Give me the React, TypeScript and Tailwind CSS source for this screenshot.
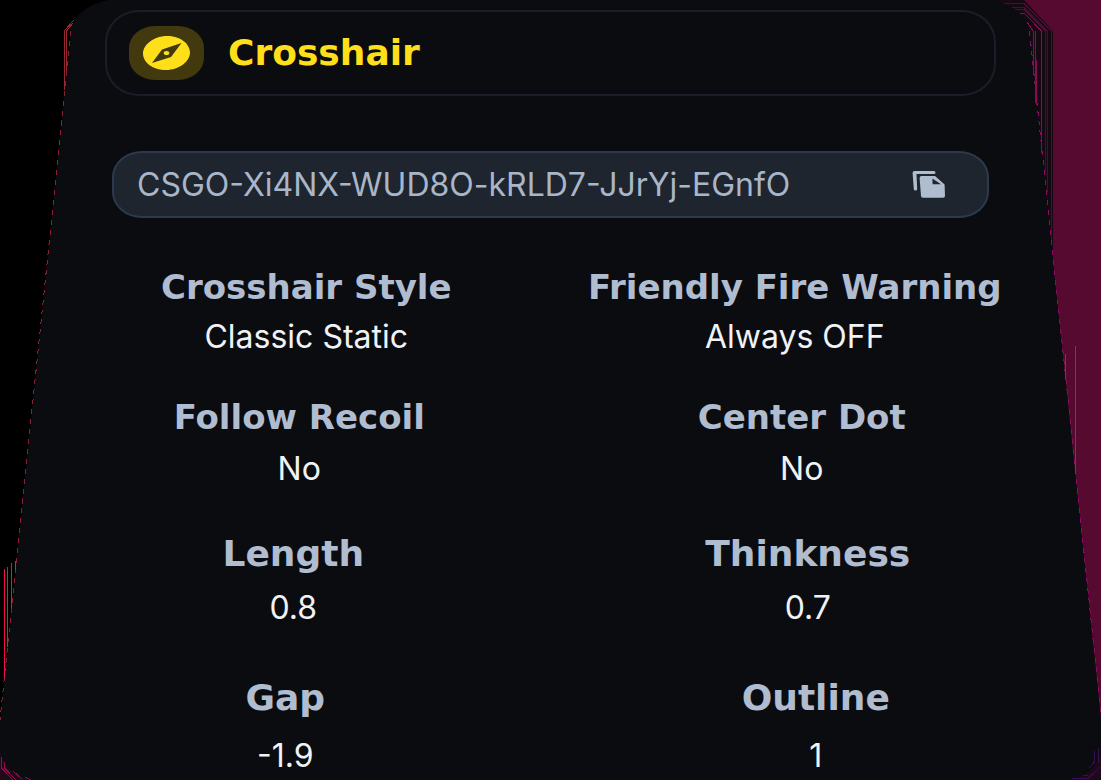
type Setting = { label: string; value: string };

type Row = { inset: string; gap: string; labelSize: string; items: [Setting, Setting] };

const rows: Row[] = [
  {
    inset: "px-[62px] mb-[42px]",
    gap: "gap-3",
    labelSize: "text-[34px]",
    items: [
      { label: "Crosshair Style", value: "Classic Static" },
      { label: "Friendly Fire Warning", value: "Always OFF" },
    ],
  },
  {
    inset: "px-12 mb-[47px]",
    gap: "gap-3.5",
    labelSize: "text-[34px]",
    items: [
      { label: "Follow Recoil", value: "No" },
      { label: "Center Dot", value: "No" },
    ],
  },
  {
    inset: "px-9 mb-[52px]",
    gap: "gap-4",
    labelSize: "text-[36px]",
    items: [
      { label: "Length", value: "0.8" },
      { label: "Thinkness", value: "0.7" },
    ],
  },
  {
    inset: "px-5",
    gap: "gap-5",
    labelSize: "text-[36px]",
    items: [
      { label: "Gap", value: "-1.9" },
      { label: "Outline", value: "1" },
    ],
  },
];

function Backdrop() {
  return (
    <svg
      aria-hidden="true"
      className="absolute inset-0 h-full w-full"
      viewBox="0 0 1101 780"
      preserveAspectRatio="none"
      fill="none"
    >
      <rect width="550" height="780" fill="#000" />
      <rect x="550" width="551" height="780" fill="#570a2f" />
      <path d="M0 752V780H34Z" fill="#200a18" />
      <path d="M1101 750V780H1060Z" fill="#1f0818" />
      <path d="M990 0H1024L1053 31V262H1040Z" fill="#160914" />
      <path
        d="M108 0C86 5 73 16 71 31L0 722V752C5 768 15 777 32 780H1070C1086 777 1097 768 1101 752V718L1029 31C1026 16 1012 3 990 0Z"
        fill="#0b0c10"
      />
      <g shapeRendering="crispEdges">
        <path d="M64.500 90V30.500L74 20M66.500 75V31L73 23" stroke="#972831" />
        <path d="M71 31L0 720" stroke="#8c2030" strokeDasharray="5 5" />
        <path d="M4.500 569V678M7.500 567V647M11.500 563V608M15.500 561V570" stroke="#f20d50" />
        <path d="M1.500 757V768L13 780M4.500 762V768L16 780M13 771L22 779M25 777L31 780" stroke="#8f0a4c" />
        <path d="M1029.500 31L1101 715" stroke="#8b0a62" strokeDasharray="5 5" />
        <path d="M1020 13H1024L1041.500 31V153M1033.500 31V75M1035.500 31V103M1036.500 60V105M1027 22L1033 31" stroke="#8b0a55" />
        <path
          d="M1004 3.500H1024L1051.500 31V240M1012 7.500H1024L1047.500 31V192M1015 9.500H1024L1045.500 31V172"
          stroke="#46102e"
        />
        <path d="M1065.500 354V379M1075.500 346V474" stroke="#a01896" />
        <path d="M1072 778.500H1088L1100 767M1083 775.500H1088M1094.500 751V762L1089 768M1098.500 748V763" stroke="#341050" />
      </g>
    </svg>
  );
}

function CompassIcon() {
  return (
    <svg aria-hidden="true" className="h-[34px] w-[47px]" viewBox="0 0 47 34">
      <path
        fill="#ffde1a"
        fillRule="evenodd"
        d="M24 0C37 0 47 7.500 47 16.500S36 34 23 34 0 26.500 0 17.500 11 0 24 0ZM38.500 7L19 13.500L9 27L28 21Z"
      />
      <ellipse cx="23.500" cy="17" rx="2.800" ry="2" fill="#ffde1a" />
    </svg>
  );
}

function CopyIcon() {
  return (
    <svg aria-hidden="true" className="h-[27px] w-[33px]" viewBox="0 0 33 27" fill="#b0bdcf">
      <path d="M2.500 0H22Q23.500 0 23.500 1.500T22 3H4.500L5.200 18Q5.200 19.500 3.500 19.500T1.800 18L.600 2Q.600 0 2.500 0Z" />
      <path
        fillRule="evenodd"
        d="M9.500 5H23L32.600 13.500L33 25Q33 26.700 31 26.700H11Q9 26.700 9 25L7.600 7Q7.600 5 9.500 5ZM20.400 7.500L20.600 13.300H29Z"
      />
    </svg>
  );
}

export default function App() {
  return (
    <main className="relative min-h-screen overflow-hidden bg-black font-['Inter','Liberation_Sans',sans-serif]">
      <Backdrop />
      <div className="relative pt-2.5">
        <header className="mx-[105px] flex h-[86px] items-center gap-6 rounded-[34px/32px] border-2 border-[#181f29] px-[22px]">
          <span className="flex h-[54px] w-[75px] shrink-0 items-center justify-center rounded-[26px/22px] bg-[#43390e]">
            <CompassIcon />
          </span>
          <h1 className="font-['DejaVu_Sans',sans-serif] text-[36px] leading-10 font-bold text-[#ffde1a]">Crosshair</h1>
        </header>

        <div className="mx-28 mt-[55px] flex h-[67px] items-center rounded-[30px/26px] border-2 border-[#2c3a4b] bg-[#1e252f] pr-[42px] pl-[23px]">
          <input
            readOnly
            aria-label="Crosshair share code"
            value="CSGO-Xi4NX-WUD8O-kRLD7-JJrYj-EGnfO"
            className="min-w-0 flex-1 bg-transparent text-[32px] leading-9 text-[#a9b6c8] outline-none"
          />
          <button type="button" aria-label="Copy code" className="shrink-0">
            <CopyIcon />
          </button>
        </div>

        <dl className="mt-[49px] pb-1.5">
          {rows.map((row) => (
            <div key={row.items[0].label} className={`grid grid-cols-2 ${row.inset}`}>
              {row.items.map((item) => (
                <div key={item.label} className={`flex flex-col items-center whitespace-nowrap ${row.gap}`}>
                  <dt
                    className={`font-['DejaVu_Sans',sans-serif] leading-10 font-bold text-[#b0bdd0] ${row.labelSize}`}
                  >
                    {item.label}
                  </dt>
                  <dd className="text-[32px] leading-9 text-[#f0f2f5]">{item.value}</dd>
                </div>
              ))}
            </div>
          ))}
        </dl>
      </div>
    </main>
  );
}
